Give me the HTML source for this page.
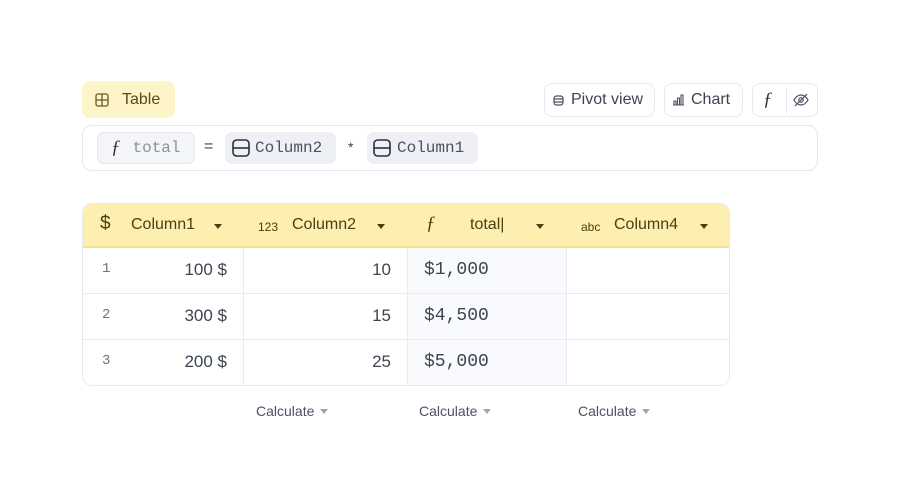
<!DOCTYPE html>
<html><head><meta charset="utf-8"><style>
*{box-sizing:border-box;margin:0;padding:0}
body{width:900px;height:498px;background:#fff;font-family:"Liberation Sans",sans-serif;position:relative;overflow:hidden;color:#3d4451}
.abs{position:absolute}
.tab{left:82px;top:81px;width:93px;height:37px;background:#fdf4c8;border-radius:8px;color:#5a4a14;font-size:16px}
.btn{top:83px;height:34px;border:1px solid #e6e9ef;border-radius:8px;background:#fff;font-size:16px;color:#3d4451;display:flex;align-items:center}
.fbar{left:82px;top:125px;width:736px;height:46px;border:1px solid #e4e8ee;border-radius:10px}
.chip{top:132px;height:32px;border-radius:7px;background:#eef0f5;font-family:"Liberation Mono",monospace;font-size:16px;display:flex;align-items:center;color:#4a5160}
.tbl{left:82px;top:203px;width:648px;height:183px;border:1px solid #e6e9ef;border-radius:10px;overflow:hidden}
.hd{position:absolute;left:0;top:0;width:648px;height:44px;background:#fdefb0;border-bottom:2px solid #f8e08a}
.ht{position:absolute;top:12px;font-size:16px;color:#4a3f12}
.tri{position:absolute;top:20px;width:0;height:0;border-left:4px solid transparent;border-right:4px solid transparent;border-top:5px solid #4a3f12}
.vl{position:absolute;top:44px;width:1px;height:140px;background:#e8ebf0}
.hl{position:absolute;left:0;width:648px;height:1px;background:#e8ebf0}
.c{position:absolute;font-size:17px;color:#3d4451}
.m{font-family:"Liberation Mono",monospace;font-size:18px}
.calc{top:403px;font-size:14px;color:#4a5160}
.ct{display:inline-block;width:0;height:0;border-left:4px solid transparent;border-right:4px solid transparent;border-top:5px solid #a0a6b1;margin-left:6px;vertical-align:2px}
</style></head><body>
<div class="abs tab">
<svg class="abs" style="left:13px;top:12px" width="14" height="14" viewBox="0 0 14 14" fill="none" stroke="#6b5a1e" stroke-width="1.3"><rect x="1" y="1" width="12" height="12" rx="2"/><path d="M7 1v12M1 7h12"/></svg>
<span class="abs" style="left:40px;top:10px">Table</span></div>

<div class="abs btn" style="left:544px;width:111px">
<svg style="margin-left:8px" width="11" height="11" viewBox="0 0 11 11" fill="none" stroke="#4a5160" stroke-width="1.2"><rect x="1" y="1" width="9" height="9" rx="2.5"/><path d="M1 4h9M1 7h9"/></svg>
<span style="margin-left:7px">Pivot view</span></div>
<div class="abs btn" style="left:664px;width:79px">
<svg style="margin-left:7px" width="13" height="12" viewBox="0 0 13 12" fill="none" stroke="#4a5160" stroke-width="1.1"><path d="M1 11h11M2 11V7h2v4M5.5 11V4h2v7M9 11V1h2v10"/></svg>
<span style="margin-left:6px">Chart</span></div>
<div class="abs btn" style="left:752px;width:66px">
<span style="position:absolute;left:10px;top:5px;font-family:'Liberation Serif',serif;font-style:italic;font-size:19px;color:#333">ƒ</span>
<div style="position:absolute;left:33px;top:3px;width:1px;height:27px;background:#e6e9ef"></div>
<svg style="position:absolute;left:40px;top:9px" width="16" height="14" viewBox="0 0 16 14" fill="none" stroke="#4a5160" stroke-width="1.2"><path d="M1 7c2-3.5 4.5-5 7-5s5 1.5 7 5c-2 3.5-4.5 5-7 5S3 10.5 1 7z"/><circle cx="8" cy="7" r="2.2"/><path d="M2 13L14 1"/></svg>
</div>

<div class="abs fbar"></div>
<div class="abs chip" style="left:97px;width:98px;background:#f3f5f9;border:1px solid #e6e9ef">
<span style="margin-left:13px;font-family:'Liberation Serif',serif;font-style:italic;font-size:19px;color:#333">ƒ</span><span style="margin-left:12px;color:#8a909b">total</span></div>
<span class="abs" style="left:204px;top:138px;font-size:16px">=</span>
<div class="abs chip" style="left:225px;width:111px">
<svg style="margin-left:7px" width="18" height="18" viewBox="0 0 18 18" fill="none" stroke="#2a2f38" stroke-width="1.6"><rect x="1" y="1" width="16" height="16" rx="3.5"/><path d="M1 9h16"/></svg><span style="margin-left:5px">Column2</span></div>
<span class="abs" style="left:348px;top:139px;font-size:14px">*</span>
<div class="abs chip" style="left:367px;width:111px">
<svg style="margin-left:6px" width="18" height="18" viewBox="0 0 18 18" fill="none" stroke="#2a2f38" stroke-width="1.6"><rect x="1" y="1" width="16" height="16" rx="3.5"/><path d="M1 9h16"/></svg><span style="margin-left:6px">Column1</span></div>

<div class="abs tbl">
<div style="position:absolute;left:325px;top:44px;width:159px;height:140px;background:#f8fafd"></div>
<div class="hd">
<span class="ht" style="left:17px;top:9px;font-size:19px">$</span>
<span class="ht" style="left:48px">Column1</span><div class="tri" style="left:131px"></div>
<span class="ht" style="left:175px;top:16px;font-size:12px">123</span>
<span class="ht" style="left:209px">Column2</span><div class="tri" style="left:294px"></div>
<span class="ht" style="left:343px;top:9px;font-family:'Liberation Serif',serif;font-style:italic;font-size:19px">ƒ</span>
<span class="ht" style="left:387px">total|</span><div class="tri" style="left:453px"></div>
<span class="ht" style="left:498px;top:16px;font-size:12px">abc</span>
<span class="ht" style="left:531px">Column4</span><div class="tri" style="left:617px"></div>
</div>
<div class="vl" style="left:160px"></div><div class="vl" style="left:324px"></div><div class="vl" style="left:483px"></div>
<div class="hl" style="top:89px"></div><div class="hl" style="top:135px"></div>
<span class="c" style="left:19px;top:57px;font-family:'Liberation Mono',monospace;font-size:14px;color:#6b7280">1</span>
<span class="c" style="left:19px;top:103px;font-family:'Liberation Mono',monospace;font-size:14px;color:#6b7280">2</span>
<span class="c" style="left:19px;top:149px;font-family:'Liberation Mono',monospace;font-size:14px;color:#6b7280">3</span>
<span class="c" style="right:502px;top:56px">100 $</span>
<span class="c" style="right:502px;top:102px">300 $</span>
<span class="c" style="right:502px;top:148px">200 $</span>
<span class="c" style="right:338px;top:56px">10</span>
<span class="c" style="right:338px;top:102px">15</span>
<span class="c" style="right:338px;top:148px">25</span>
<span class="c m" style="left:341px;top:56px">$1,000</span>
<span class="c m" style="left:341px;top:102px">$4,500</span>
<span class="c m" style="left:341px;top:148px">$5,000</span>
</div>

<span class="abs calc" style="left:256px">Calculate<i class="ct"></i></span>
<span class="abs calc" style="left:419px">Calculate<i class="ct"></i></span>
<span class="abs calc" style="left:578px">Calculate<i class="ct"></i></span>
</body></html>
